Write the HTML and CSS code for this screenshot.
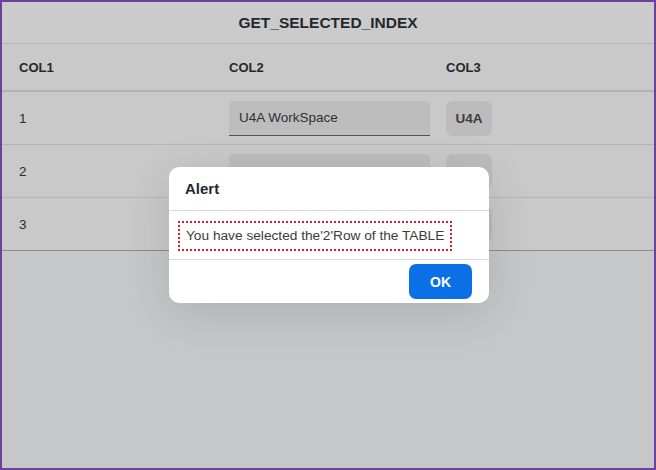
FILE: index.html
```html
<!DOCTYPE html>
<html>
<head>
<meta charset="utf-8">
<link rel="stylesheet" href="styles.css">
</head>
<body>
<div class="frame">
  <div class="title">GET_SELECTED_INDEX</div>
  <div class="table">
    <div class="row head">
      <div class="cell c1">COL1</div>
      <div class="cell c2">COL2</div>
      <div class="cell c3">COL3</div>
    </div>
    <div class="row">
      <div class="cell c1">1</div>
      <div class="cell c2"><div class="input">U4A WorkSpace</div></div>
      <div class="cell c3"><div class="btn">U4A</div></div>
    </div>
    <div class="row">
      <div class="cell c1">2</div>
      <div class="cell c2"><div class="input"></div></div>
      <div class="cell c3"><div class="btn">U4A</div></div>
    </div>
    <div class="row last">
      <div class="cell c1">3</div>
      <div class="cell c2"><div class="input"></div></div>
      <div class="cell c3"><div class="btn">U4A</div></div>
    </div>
  </div>
  <div class="dialog">
    <div class="dlg-head">Alert</div>
    <div class="dlg-body"><span class="msg">You have selected the'2'Row of the TABLE</span></div>
    <div class="dlg-foot"><button class="ok">OK</button></div>
  </div>
</div>
</body>
</html>
```
FILE: styles.css
```css
* { box-sizing: border-box; }
html, body { margin: 0; padding: 0; }
body {
  font-family: "Liberation Sans", Arial, sans-serif;
  color: #2a2d30;
  width: 656px;
  height: 470px;
  overflow: hidden;
}
.frame {
  position: relative;
  width: 656px;
  height: 470px;
  border: 2px solid #6f3f9e;
  background: #c6c7c8;
}
.title {
  height: 42px;
  display: flex;
  align-items: center;
  justify-content: center;
  font-weight: bold;
  font-size: 15.5px;
  background: #cbcbcb;
  border-bottom: 1px solid #b3b3b3;
  color: #25282b;
}
.table { background: #c9c9c9; }
.row {
  display: flex;
  height: 53px;
  align-items: center;
  border-bottom: 1px solid #b5b5b5;
  font-size: 13.5px;
}
.row.head {
  height: 48px;
  font-weight: bold;
  font-size: 13px;
  border-bottom: 2px solid #b3b3b3;
  color: #25282b;
}
.row.last { border-bottom: 1px solid #8e8e8e; }
.cell.c1 { width: 227px; padding-left: 17px; }
.cell.c2 { width: 217px; }
.cell.c3 { flex: 1; }
.input {
  width: 201px;
  height: 35px;
  background: #bdbdbd;
  border-radius: 4px 4px 0 0;
  border-bottom: 1px solid #50555a;
  padding-left: 10px;
  display: flex;
  align-items: center;
  color: #2e3134;
}
.btn {
  width: 46px;
  height: 35px;
  background: #bcbcbc;
  border-radius: 7px;
  display: flex;
  align-items: center;
  justify-content: center;
  font-weight: bold;
  color: #3b3e42;
}
.dialog {
  position: absolute;
  left: 167px;
  top: 165px;
  width: 320px;
  height: 136px;
  background: #ffffff;
  border-radius: 10px;
  box-shadow: 0 10px 48px rgba(0,0,0,0.12);
  display: flex;
  flex-direction: column;
}
.dlg-head {
  height: 44px;
  padding-left: 16px;
  display: flex;
  align-items: center;
  font-weight: bold;
  font-size: 15px;
  border-bottom: 1px solid #d9d9d9;
  color: #25282b;
}
.dlg-body {
  height: 49px;
  padding: 10px 0 0 9px;
  border-bottom: 1px solid #d9d9d9;
}
.msg {
  display: inline-block;
  height: 30px;
  line-height: 26px;
  padding: 0 6px;
  border: 2px dotted #d0202a;
  font-size: 13.7px;
  color: #3a3d40;
}
.dlg-foot {
  flex: 1;
  display: flex;
  align-items: center;
  justify-content: flex-end;
  padding-right: 17px;
}
.ok {
  width: 63px;
  height: 35px;
  border: none;
  border-radius: 7px;
  background: #0b70e6;
  color: #ffffff;
  font-family: "Liberation Sans", Arial, sans-serif;
  font-weight: bold;
  font-size: 14px;
}
```
